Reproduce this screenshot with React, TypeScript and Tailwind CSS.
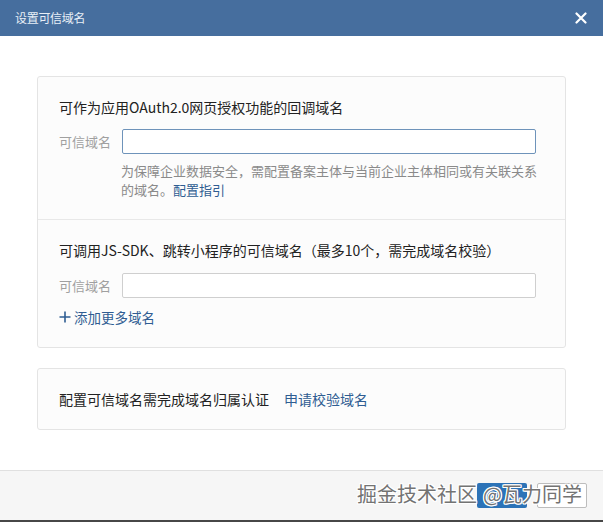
import React from "react";

const cjk = { fontFamily: '"Noto Sans CJK SC", "Liberation Sans", sans-serif' };

function DomainRow({ focused }: { focused?: boolean }) {
  return (
    <div className="flex items-center gap-[9px]">
      <span className="w-[54px] text-[13px] leading-5 text-[#a0a0a0]">可信域名</span>
      <div
        className={`h-[25px] w-[414px] rounded-[2px] border bg-white ${
          focused ? "border-[#6e93ba]" : "border-[#cfcfcf]"
        }`}
      />
    </div>
  );
}

export default function App() {
  return (
    <div className="relative flex h-[522px] w-[603px] flex-col bg-white" style={cjk}>
      {/* title bar */}
      <div className="flex h-9 shrink-0 items-center justify-between bg-[#466e9e] pl-[15px] pr-[15px]">
        <span className="text-[12px] tracking-[-0.3px] text-[#e8eef6]">设置可信域名</span>
        <svg width="12" height="12" viewBox="0 0 12 12" className="mr-[1px]">
          <path d="M1.5 1.5 L10.5 10.5 M10.5 1.5 L1.5 10.5" stroke="#ffffff" strokeWidth="2.2" strokeLinecap="round" />
        </svg>
      </div>

      {/* content */}
      <div className="flex flex-1 flex-col gap-[20px] px-[37px] pt-[40px]">
        <div className="rounded-[3px] border border-[#e4e4e4] bg-[#fcfcfc]">
          <div className="flex flex-col border-b border-[#e8e8e8] px-[21px] pb-[20px] pt-[20px]">
            <div className="text-[14px] leading-5 text-[#222]">可作为应用OAuth2.0网页授权功能的回调域名</div>
            <div className="mt-[12px]">
              <DomainRow focused />
            </div>
            <div className="mt-[7px] w-[482px] pl-[62px] text-[13px] leading-[19px] text-[#8a8a8a]">
              为保障企业数据安全，需配置备案主体与当前企业主体相同或有关联关系的域名。<span className="text-[#2f5d92]">配置指引</span>
            </div>
          </div>
          <div className="flex flex-col px-[21px] pb-[20px] pt-[20px]">
            <div className="text-[14px] leading-5 text-[#222]">
              可调用JS-SDK、跳转小程序的可信域名（最多10个，需完成域名校验）
            </div>
            <div className="mt-[13px]">
              <DomainRow />
            </div>
            <div className="mt-[9px] flex items-center gap-[3px] text-[13.5px] leading-5 text-[#2f5d92]">
              <svg width="12" height="12" viewBox="0 0 12 12">
                <path d="M6 0.5 V11.5 M0.5 6 H11.5" stroke="#2f5d92" strokeWidth="1.6" />
              </svg>
              <span>添加更多域名</span>
            </div>
          </div>
        </div>

        <div className="flex h-[62px] items-center gap-[15px] rounded-[3px] border border-[#e4e4e4] bg-[#fcfcfc] px-[21px] text-[14px]">
          <span className="text-[#222]">配置可信域名需完成域名归属认证</span>
          <span className="text-[#2f5d92]">申请校验域名</span>
        </div>
      </div>

      {/* footer */}
      <div className="flex h-[52px] shrink-0 flex-col">
        <div className="flex h-[50px] items-center justify-end gap-[10px] border-t border-[#e0e0e0] bg-[#f6f6f6] pr-[16px]">
          <div aria-label="确定" className="h-[25px] w-[50px] rounded-[2px] bg-[#2c73b7]" />
          <div aria-label="取消" className="h-[25px] w-[50px] rounded-[2px] border border-[#bdbdbd] bg-white" />
        </div>
        <div className="h-[2px] bg-[#474747]" />
      </div>

      {/* watermark */}
      <div
        className="pointer-events-none absolute left-[357px] top-[480px] whitespace-nowrap text-[20px] leading-7 text-[#737373]"
        style={{
          textShadow:
            "1px 0 0 #fff, -1px 0 0 #fff, 0 1px 0 #fff, 0 -1px 0 #fff, 1px 1px 0 #fff, -1px -1px 0 #fff, 1px -1px 0 #fff, -1px 1px 0 #fff",
        }}
      >
        掘金技术社区<span className="ml-[6px]">@</span>瓦力同学
      </div>
    </div>
  );
}
